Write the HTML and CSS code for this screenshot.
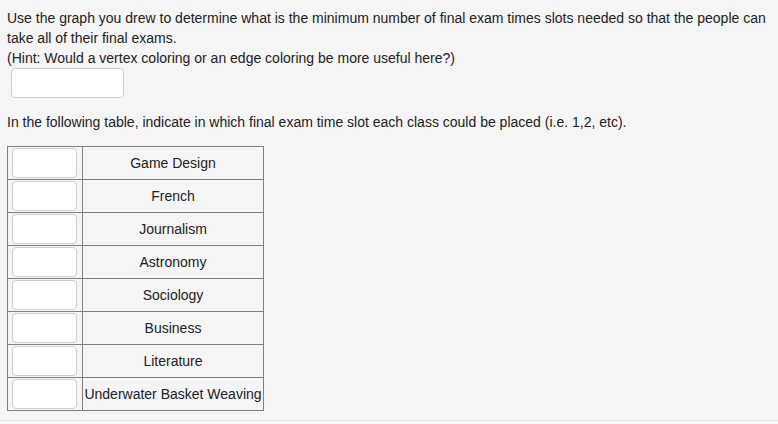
FILE: index.html
```html
<!DOCTYPE html>
<html>
<head>
<meta charset="utf-8">
<link rel="stylesheet" href="styles.css">
</head>
<body>
<div class="page">
  <p class="q">Use the graph you drew to determine what is the minimum number of final exam times slots needed so that the people can take all of their final exams.<br>(Hint: Would a vertex coloring or an edge coloring be more useful here?)</p>
  <div class="answer"><input class="box" type="text"></div>
  <p class="q2">In the following table, indicate in which final exam time slot each class could be placed (i.e. 1,2, etc).</p>
  <table class="grid">
    <tr><td class="in"><input class="slot" type="text"></td><td class="name">Game Design</td></tr>
    <tr><td class="in"><input class="slot" type="text"></td><td class="name">French</td></tr>
    <tr><td class="in"><input class="slot" type="text"></td><td class="name">Journalism</td></tr>
    <tr><td class="in"><input class="slot" type="text"></td><td class="name">Astronomy</td></tr>
    <tr><td class="in"><input class="slot" type="text"></td><td class="name">Sociology</td></tr>
    <tr><td class="in"><input class="slot" type="text"></td><td class="name">Business</td></tr>
    <tr><td class="in"><input class="slot" type="text"></td><td class="name">Literature</td></tr>
    <tr><td class="in"><input class="slot" type="text"></td><td class="name">Underwater Basket Weaving</td></tr>
  </table>
</div>
</body>
</html>
```
FILE: styles.css
```css
html, body {
  margin: 0;
  padding: 0;
  background: #f5f5f5;
}
.page {
  padding: 8px 7px 0 7px;
  height: 412px;
  border-bottom: 1px solid #e3e3e3;
  font-family: "Liberation Sans", Arial, sans-serif;
  font-size: 14px;
  line-height: 20px;
  color: #222;
}
.q, .q2 {
  margin: 0;
}
.answer {
  padding-left: 4px;
  height: 29px;
}
.box {
  display: block;
  box-sizing: border-box;
  width: 113px;
  height: 30px;
  margin: 0;
  border: 1px solid #cfcfcf;
  border-radius: 4px;
  background: #fff;
}
.q2 {
  margin-top: 15px;
}
.grid {
  margin-top: 14px;
  border-collapse: collapse;
  border: 1px solid #808080;
}
.grid td {
  border: 1px solid #808080;
  padding: 1px 0;
}
.grid td.in {
  padding: 1px 5px 1px 4px;
}
.slot {
  display: block;
  box-sizing: border-box;
  width: 65px;
  height: 30px;
  margin: 0;
  border: 1px solid #cfcfcf;
  border-radius: 4px;
  background: #fff;
}
.name {
  text-align: center;
  width: 180px;
  white-space: nowrap;
}
```
